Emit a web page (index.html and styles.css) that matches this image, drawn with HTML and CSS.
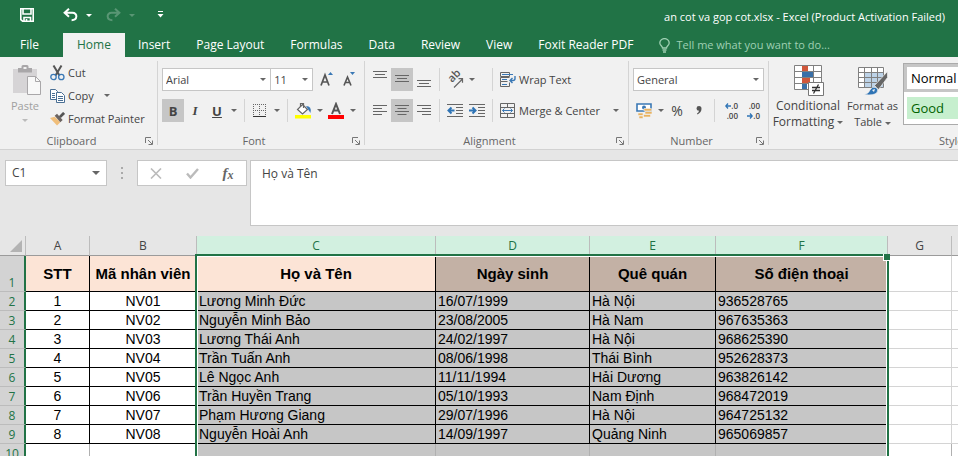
FILE: index.html
```html
<!DOCTYPE html>
<html lang="vi">
<head>
    <meta charset="UTF-8">
    <meta name="viewport" content="width=device-width, initial-scale=1.0">
    <title>an cot va gop cot.xlsx - Excel</title>
    <link rel="stylesheet" href="styles.css">
</head>
<body>

<header class="top">
    <div class="titlebar">
        <div class="quick">
            <button class="quick-btn" aria-label="Save">
                <svg width="14" height="14" viewBox="0 0 14 14" fill="none" stroke="#fff" stroke-width="1.6"><path d="M.8.8h12.4v12.4H2.6L.8 11.6z"/><path d="M3 1v5h8V1"/><path d="M4 13V9.500h6.500v4"/><path d="M6.500 11v2"/></svg>
            </button>
            <button class="quick-btn undo" aria-label="Undo">
                <svg width="15" height="14" viewBox="0 0 15 14" fill="none" stroke="#fff" stroke-width="2"><path d="M6 .8 1.6 4.8 6 8.8M2 4.8h7.4c5.6 0 5.2 7.4-.8 7.4"/></svg>
                <i class="caret"></i>
            </button>
            <button class="quick-btn redo" aria-label="Redo">
                <svg width="15" height="14" viewBox="0 0 15 14" fill="none" stroke="#fff" stroke-width="2"><path d="M9 .8l4.4 4L9 8.8M13 4.8H5.6c-5.6 0-5.2 7.4.8 7.4"/></svg>
                <i class="caret"></i>
            </button>
            <button class="quick-btn" aria-label="Customize">
                <svg width="7" height="8" viewBox="0 0 7 8" fill="#fff"><path d="M1 0h5v1H1zM.5 3h6l-3 3.5z"/></svg>
            </button>
        </div>
        <h1 class="doc-title">an cot va gop cot.xlsx - Excel (Product Activation Failed)</h1>
    </div>
    <nav class="tabs">
        <a class="tab file" href="#">File</a>
        <a class="tab active" href="#">Home</a>
        <a class="tab" href="#">Insert</a>
        <a class="tab" href="#">Page Layout</a>
        <a class="tab" href="#">Formulas</a>
        <a class="tab" href="#">Data</a>
        <a class="tab" href="#">Review</a>
        <a class="tab" href="#">View</a>
        <a class="tab" href="#">Foxit Reader PDF</a>
        <a class="tab tell" href="#">
            <svg width="11" height="15" viewBox="0 0 11 15" fill="none" stroke="#9fd0b3" stroke-width="1.3"><path d="M3.5 10C3.5 8 .8 7.400.8 4.900a4.700 4.300 0 0 1 9.400 0C10.200 7.400 7.500 8 7.500 10z"/><path d="M3.500 12h4M4 14h3"/></svg>
            Tell me what you want to do...
        </a>
    </nav>
</header>

<section class="ribbon">
    <div class="group clipboard">
        <div class="clip-body">
            <button class="paste" disabled>
                <svg width="30" height="31" viewBox="0 0 30 31"><path fill="#d6d4d6" d="M1 4h24v24H1z"/><path fill="#a9a7a9" d="M6 3h3.500V1.500Q9.500 0 11 0h4q1.500 0 1.500 1.500V3H20v4.500H6zM11.500 2v2h3V2z"/><path fill="#f8f8f8" stroke="#a9a7a9" d="M15.500 11.500h8l5 5v13h-13z"/><path fill="none" stroke="#a9a7a9" d="M23.500 11.500v5h5"/></svg>
                <span>Paste</span>
                <i class="caret"></i>
            </button>
            <div class="clip-list">
                <button class="item">
                    <svg width="15" height="16" viewBox="0 0 15 16" fill="none"><path stroke="#555" stroke-width="2" d="M3.500.5l6 10M11.500.5l-6 10"/><circle cx="3.500" cy="12" r="2.700" stroke="#3a78b5" stroke-width="1.300"/><circle cx="11.300" cy="12" r="2.700" stroke="#3a78b5" stroke-width="1.300"/></svg>
                    Cut
                </button>
                <button class="item">
                    <svg width="15" height="14" viewBox="0 0 15 14" fill="#fff" stroke="#4a6f94"><path d="M.5.5h5l2 2v8h-7z"/><path d="M2 4.500h3M2 6.500h3M2 8.500h3"/><path d="M6.500 3.500h5l3 3v7h-8z"/><path d="M8 7.500h5M8 9.500h5M8 11.500h5"/></svg>
                    Copy
                    <i class="caret"></i>
                </button>
                <button class="item">
                    <svg width="15" height="14" viewBox="0 0 16 14"><path fill="#f0be7a" d="M0 6l5-1.500 6 6L7.500 14z"/><path fill="#6b6360" d="M5 3.500l2.500-2 6 6.500-2.500 2.500z"/><path stroke="#555" stroke-width="3" d="M10.500 5l4.500-4.500"/></svg>
                    Format Painter
                </button>
            </div>
        </div>
        <div class="group-label">Clipboard</div>
        <svg class="launcher" width="8" height="8" viewBox="0 0 8 8" fill="none" stroke="#777"><path d="M.5 6V.5H6M3 3l4 4M7.500 3.500v4h-4"/></svg>
    </div>

    <div class="group font">
        <div class="row">
            <div class="combo font-name"><select aria-label="Font"><option>Arial</option></select></div>
            <div class="combo font-size"><select aria-label="Font size"><option>11</option></select></div>
            <button class="tool grow" aria-label="Increase font size">
                <svg width="14" height="15" viewBox="0 0 14 15"><path fill="none" stroke="#555" stroke-width="1.700" d="M1 13.500 5 3l4 10.500M2.500 10h5"/><path fill="#3a78b5" d="M8 3h5l-2.500-3z"/></svg>
            </button>
            <button class="tool" aria-label="Decrease font size">
                <svg width="13" height="15" viewBox="0 0 13 15"><path fill="none" stroke="#555" stroke-width="1.600" d="M1 13.500 4.500 5 8 13.500M2.200 10.500h4.600"/><path fill="#3a78b5" d="M7 0h5L9.500 3z"/></svg>
            </button>
        </div>
        <div class="row">
            <button class="tool on bold">B</button>
            <button class="tool italic">I</button>
            <button class="tool underline">U</button>
            <button class="drop" aria-label="Underline options"><i class="caret"></i></button>
            <span class="sep"></span>
            <button class="tool" aria-label="Borders">
                <svg width="14" height="14" viewBox="0 0 14 14" fill="none" stroke="#666"><path stroke-dasharray="1 1" d="M0 .5h13M0 6.500h13M.5 0v12M6.500 0v12M12.500 0v12"/><path stroke="#333" d="M0 12.500h13"/></svg>
            </button>
            <button class="drop" aria-label="Border options"><i class="caret"></i></button>
            <span class="sep"></span>
            <button class="tool" aria-label="Fill color">
                <svg width="17" height="17" viewBox="0 0 17 17"><path fill="#ff0" d="M0 13h16v3.500H0z"/><path fill="#fff" stroke="#666" stroke-width="1.200" d="M7.500 2.500l5 5-5 4.500-5-4.500z"/><path fill="none" stroke="#666" stroke-width="1.200" d="M5.500 5V1.500h3V6"/><path fill="#3a78b5" d="M11 4q6 0 4.500 7l-2-3z"/></svg>
            </button>
            <button class="drop" aria-label="Fill options"><i class="caret"></i></button>
            <button class="tool" aria-label="Font color">
                <svg width="17" height="17" viewBox="0 0 17 17"><path fill="#f00" d="M0 13h16v4H0z"/><path fill="none" stroke="#555" stroke-width="2" d="M4 12 8 2 12 12M5.500 8.500h5"/></svg>
            </button>
            <button class="drop" aria-label="Font color options"><i class="caret"></i></button>
        </div>
        <div class="group-label">Font</div>
        <svg class="launcher" width="8" height="8" viewBox="0 0 8 8" fill="none" stroke="#777"><path d="M.5 6V.5H6M3 3l4 4M7.500 3.500v4h-4"/></svg>
    </div>

    <div class="group alignment">
        <div class="row">
            <button class="tool" aria-label="Top align"><svg width="14" height="17" viewBox="0 0 14 17" stroke="#666"><path d="M0 .5h14M2 3.500h10M0 6.500h14"/></svg></button>
            <button class="tool on" aria-label="Middle align"><svg width="14" height="17" viewBox="0 0 14 17" stroke="#666"><path d="M0 4.500h14M2 7.500h10M0 10.500h14"/></svg></button>
            <button class="tool" aria-label="Bottom align"><svg width="14" height="17" viewBox="0 0 14 17" stroke="#666"><path d="M0 9.500h14M2 12.500h10M0 15.500h14"/></svg></button>
            <span class="sep"></span>
            <div class="cluster">
                <button class="tool" aria-label="Orientation">
                    <svg class="orient" width="17" height="16" viewBox="0 0 17 16"><text class="ab" transform="translate(5 11) rotate(-45)">ab</text><path fill="none" stroke="#666" stroke-width="1.200" d="M7 15.500 15.500 7M11.500 6.700h4v4"/></svg>
                </button>
                <button class="drop" aria-label="Orientation options"><i class="caret"></i></button>
            </div>
            <span class="sep"></span>
            <button class="wide">
                <svg width="16" height="16" viewBox="0 0 16 16" fill="none" stroke="#666"><path d="M.5.500h9v4h-9zM9.500 5.500h-9v4h7M.5 9.500v5h9v-4"/><path stroke="#3a78b5" d="M2 2.500h11M2 7.500h5M2 12.500h5"/><path stroke="#3a78b5" stroke-width="1.400" d="M15 4v2.500q0 2-2 2h-3M12.500 6 10 8.500l2.500 2.500"/></svg>
                Wrap Text
            </button>
        </div>
        <div class="row">
            <button class="tool" aria-label="Align left"><svg width="14" height="14" viewBox="0 0 14 14" stroke="#666"><path d="M0 1.500h14M0 4.500h9M0 7.500h14M0 10.500h9"/></svg></button>
            <button class="tool on" aria-label="Center"><svg width="14" height="14" viewBox="0 0 14 14" stroke="#666"><path d="M0 1.500h14M2.500 4.500h9M0 7.500h14M2.500 10.500h9"/></svg></button>
            <button class="tool" aria-label="Align right"><svg width="14" height="14" viewBox="0 0 14 14" stroke="#666"><path d="M0 1.500h14M5 4.500h9M0 7.500h14M5 10.500h9"/></svg></button>
            <span class="sep"></span>
            <div class="cluster">
                <button class="tool" aria-label="Decrease indent"><svg width="16" height="14" viewBox="0 0 16 14" fill="none" stroke="#666"><path d="M0 .5h16M9 3.500h7M9 6.500h7M9 9.500h7M0 12.500h16"/><path stroke="#2f74b5" stroke-width="2" d="M7.500 6.500H1.500M4.500 3.500l-3 3 3 3"/></svg></button>
                <button class="tool" aria-label="Increase indent"><svg width="16" height="14" viewBox="0 0 16 14" fill="none" stroke="#666"><path d="M0 .5h16M9 3.500h7M9 6.500h7M9 9.500h7M0 12.500h16"/><path stroke="#2f74b5" stroke-width="2" d="M0 6.500h6M3.500 3.500l3 3-3 3"/></svg></button>
            </div>
            <span class="sep"></span>
            <button class="wide merge">
                <svg width="16" height="16" viewBox="0 0 16 16" fill="none" stroke="#666"><path d="M.5.500h14v14H.500zM.5 4.500h14M.5 10.500h14M7.500.500v4M7.500 10.500v4"/><path stroke="#3a78b5" d="M2.500 7.500h10M4.500 5.500l-2 2 2 2M10.500 5.500l2 2-2 2"/></svg>
                Merge &amp; Center
            </button>
            <button class="drop" aria-label="Merge options"><i class="caret"></i></button>
        </div>
        <div class="group-label">Alignment</div>
        <svg class="launcher" width="8" height="8" viewBox="0 0 8 8" fill="none" stroke="#777"><path d="M.5 6V.5H6M3 3l4 4M7.500 3.500v4h-4"/></svg>
    </div>

    <div class="group number">
        <div class="row">
            <div class="combo format"><select aria-label="Number format"><option>General</option></select></div>
        </div>
        <div class="row">
            <button class="tool" aria-label="Accounting format">
                <svg width="17" height="16" viewBox="0 0 17 16"><path fill="#fff" stroke="#3a78b5" stroke-width="1.600" d="M1 1h14v7H1z"/><circle cx="8" cy="4.500" r="2" fill="#3a78b5"/><path fill="#e9b25f" stroke="#f1f1f1" stroke-width=".6" d="M8 5.500h7.500V8H8zM9 8.500h7V11H9zM7.500 11.500h7V14h-7zM2 10h5v2.500H2zM3 13h4v2.500H3z"/></svg>
            </button>
            <button class="drop" aria-label="Accounting options"><i class="caret"></i></button>
            <button class="tool percent">%</button>
            <button class="tool" aria-label="Comma style"><svg width="6" height="9" viewBox="0 0 6 9" fill="#555"><path d="M3 0q2.500 0 2.500 2.800Q5.500 6.500 1.500 8.500L1 7.500Q3 6.300 3 4.800.500 4.800.500 2.400.500 0 3 0z"/></svg></button>
            <span class="sep"></span>
            <button class="tool decimals"><span><svg width="6" height="6" viewBox="0 0 6 6" fill="none" stroke="#2f74b5" stroke-width="1.300"><path d="M6 3H1M3 .5.800 3 3 5.500"/></svg>.0</span><span>.00</span></button>
            <button class="tool decimals"><span>.00</span><span><svg width="6" height="6" viewBox="0 0 6 6" fill="none" stroke="#2f74b5" stroke-width="1.300"><path d="M0 3h5M3 .5 5.200 3 3 5.500"/></svg>.0</span></button>
        </div>
        <div class="group-label">Number</div>
        <svg class="launcher" width="8" height="8" viewBox="0 0 8 8" fill="none" stroke="#777"><path d="M.5 6V.5H6M3 3l4 4M7.500 3.500v4h-4"/></svg>
    </div>

    <div class="group styles">
        <div class="styles-body">
            <button class="big conditional">
                <svg width="31" height="31" viewBox="0 0 31 31"><path fill="#fff" stroke="#808080" d="M1.500.500h27v24h-27zM1.500 6.500h27M1.500 12.500h27M1.500 18.500h27M9.500.500v24M20.500.500v24"/><path fill="#d0573b" d="M9 1h6v5H9zM9 13h8v5H9z"/><path fill="#3a70a8" d="M9 7h11v5H9zM9 19h5v5H9z"/><path fill="#fff" stroke="#777" d="M15.500 17.500h15v13h-15z"/><path fill="none" stroke="#333" stroke-width="1.300" d="M19 22.500h8M19 25.500h8M25.500 19.500l-5 9"/></svg>
                <span>Conditional</span>
                <span>Formatting <i class="caret"></i></span>
            </button>
            <button class="big format-table">
                <svg width="31" height="31" viewBox="0 0 31 31"><path fill="#fff" d="M1.500 2.500h26v20h-26z"/><path fill="#bdd3e8" d="M8 8h19v14H8z"/><path fill="none" stroke="#808080" d="M1.500 2.500h25v20h-25zM1.500 7.500h25M1.500 12.500h25M1.500 17.500h25M7.500 2.500v20M14.500 2.500v20M20.500 2.500v20"/><path fill="#666" stroke="#f1f1f1" stroke-width=".7" d="M30.500 6.500v6l-9 12-4-4z"/><path fill="#2f74b5" stroke="#f1f1f1" stroke-width=".7" d="M7 29.500q5-1 6-4.500 2-4 6-2.500 3 2 1 5-3 3.500-13 2z"/><path fill="#f1f1f1" d="M15 25l3-1-1 3z"/></svg>
                <span>Format as</span>
                <span>Table <i class="caret"></i></span>
            </button>
            <div class="gallery">
                <button class="swatch normal">Normal</button>
                <button class="swatch good">Good</button>
            </div>
        </div>
        <div class="group-label">Styles</div>
    </div>
</section>

<section class="formula-bar">
    <div class="name-box">
        <input type="text" value="C1" aria-label="Name box">
        <i class="caret"></i>
    </div>
    <svg class="dots" width="3" height="12" viewBox="0 0 3 12" fill="#aaa"><path d="M0 0h2v2H0zM0 5h2v2H0zM0 10h2v2H0z"/></svg>
    <div class="formula-btns">
        <button aria-label="Cancel"><svg width="12" height="11" viewBox="0 0 12 11" fill="none" stroke="#bbb" stroke-width="1.600"><path d="M1 .500l10 10M11 .500l-10 10"/></svg></button>
        <button aria-label="Enter"><svg width="13" height="11" viewBox="0 0 13 11" fill="none" stroke="#bbb" stroke-width="2.400"><path d="M1 5.500l3.500 4L12 1"/></svg></button>
        <button class="fx"><i>f</i><small>x</small></button>
    </div>
    <textarea class="formula" aria-label="Formula bar">Họ và Tên</textarea>
</section>

<main class="sheet">
    <table>
        <colgroup>
            <col class="col-head"><col class="col-a"><col class="col-b"><col class="col-c"><col class="col-d"><col class="col-e"><col class="col-f"><col class="col-g"><col>
        </colgroup>
        <thead>
            <tr>
                <th class="corner"><svg width="12" height="12" viewBox="0 0 12 12" fill="#b3b3b3"><path d="M12 0v12H0z"/></svg></th>
                <th>A</th><th>B</th><th class="sel">C</th><th class="sel">D</th><th class="sel">E</th><th class="sel">F</th><th>G</th><th></th>
            </tr>
        </thead>
        <tbody>
            <tr class="titles"><th>1</th><td>STT</td><td>Mã nhân viên</td><td>Họ và Tên</td><td class="dark">Ngày sinh</td><td class="dark">Quê quán</td><td class="dark">Số điện thoại</td><td></td><td></td></tr>
            <tr><th>2</th><td>1</td><td>NV01</td><td>Lương Minh Đức</td><td>16/07/1999</td><td>Hà Nội</td><td>936528765</td><td></td><td></td></tr>
            <tr><th>3</th><td>2</td><td>NV02</td><td>Nguyễn Minh Bảo</td><td>23/08/2005</td><td>Hà Nam</td><td>967635363</td><td></td><td></td></tr>
            <tr><th>4</th><td>3</td><td>NV03</td><td>Lương Thái Anh</td><td>24/02/1997</td><td>Hà Nội</td><td>968625390</td><td></td><td></td></tr>
            <tr><th>5</th><td>4</td><td>NV04</td><td>Trần Tuấn Anh</td><td>08/06/1998</td><td>Thái Bình</td><td>952628373</td><td></td><td></td></tr>
            <tr><th>6</th><td>5</td><td>NV05</td><td>Lê Ngọc Anh</td><td>11/11/1994</td><td>Hải Dương</td><td>963826142</td><td></td><td></td></tr>
            <tr><th>7</th><td>6</td><td>NV06</td><td>Trần Huyền Trang</td><td>05/10/1993</td><td>Nam Định</td><td>968472019</td><td></td><td></td></tr>
            <tr><th>8</th><td>7</td><td>NV07</td><td>Phạm Hương Giang</td><td>29/07/1996</td><td>Hà Nội</td><td>964725132</td><td></td><td></td></tr>
            <tr><th>9</th><td>8</td><td>NV08</td><td>Nguyễn Hoài Anh</td><td>14/09/1997</td><td>Quảng Ninh</td><td>965069857</td><td></td><td></td></tr>
            <tr class="empty"><th>10</th><td></td><td></td><td></td><td></td><td></td><td></td><td></td><td></td></tr>
        </tbody>
    </table>
    <div class="selection"></div>
</main>

</body>
</html>
```

FILE: styles.css
```css
* {
    box-sizing: border-box;
}
body {
    font-family: "Open Sans", "Noto Sans", sans-serif;
    font-size: 12px;
    line-height: 16px;
    color: #444;
    margin: 0;
    height: 100vh;
    overflow: hidden;
    background-color: #e6e6e6;
}
button, select, input, textarea {
    font: inherit;
    color: inherit;
    margin: 0;
    padding: 0;
    border: none;
    background: none;
}
button {
    display: flex;
    align-items: center;
    justify-content: center;
    white-space: nowrap;
}
svg {
    flex: none;
}
.caret {
    display: inline-block;
    border: 3px solid transparent;
    border-top-color: #666;
    border-bottom: none;
}

/* Title bar and tabs */
.top {
    background-color: #217346;
    color: #fff;
}
.titlebar {
    display: flex;
    align-items: center;
    justify-content: space-between;
    height: 33px;
    padding: 0 13px 0 20px;
}
.quick {
    display: flex;
    align-items: center;
    margin-bottom: 3px;
}
.quick-btn {
    gap: 8px;
}
.quick-btn .caret {
    border-top-color: #fff;
}
.undo {
    margin-left: 29px;
}
.redo {
    margin: 0 22px 0 14px;
    opacity: 0.25;
}
.doc-title {
    margin: 0;
    font-size: 11px;
    font-weight: normal;
}
.tabs {
    display: flex;
    height: 24px;
}
.tab {
    display: flex;
    align-items: center;
    padding: 0 13px;
    color: #fff;
    text-decoration: none;
    white-space: nowrap;
}
.file {
    width: 63px;
    padding-left: 20px;
}
.active {
    padding: 0 14px;
    background-color: #f1f1f1;
    color: #217346;
}
.tell {
    gap: 6px;
    color: #9fd0b3;
    font-size: 11px;
}

/* Ribbon */
.ribbon {
    display: flex;
    height: 93px;
    padding: 4px 0;
    background-color: #f1f1f1;
    border-bottom: 1px solid #d2d2d2;
    overflow: hidden;
}
.group {
    position: relative;
    flex: none;
    padding: 7px 4px 0;
    border-right: 1px solid #d4d4d4;
}
.clipboard {
    width: 158px;
    padding: 0;
}
.font {
    width: 207px;
}
.alignment {
    width: 264px;
}
.number {
    width: 140px;
}
.styles {
    flex: 1;
    min-width: 0;
    padding: 0;
    border: none;
}
.group-label {
    position: absolute;
    left: 0;
    right: 14px;
    bottom: -4px;
    font-size: 11px;
    text-align: center;
    color: #666;
}
.styles .group-label {
    right: auto;
    left: 170px;
}
.launcher {
    position: absolute;
    right: 4px;
    bottom: 0;
}
.row {
    display: flex;
    height: 23px;
    margin-bottom: 8px;
}
.tool {
    width: 22px;
}
.drop {
    width: 11px;
}
.on {
    background-color: #c6c6c6;
}
.sep {
    width: 1px;
    margin: 0 4px 0 5px;
    background-color: #d4d4d4;
}
.alignment .sep, .number .sep {
    margin: 0 4px;
}
.cluster {
    display: flex;
    width: 44px;
}
.wide {
    gap: 3px;
    padding: 0 3px;
    font-size: 11px;
}
.merge {
    margin-right: 8px;
}
.orient {
    overflow: visible;
}
.ab {
    font-size: 11px;
    font-weight: 600;
    fill: #555;
}
.bold, .italic, .underline {
    font-size: 13px;
    font-weight: bold;
}
.italic {
    font-family: "Liberation Serif", serif;
    font-style: italic;
}
.underline {
    text-decoration: underline;
}
.percent {
    font-size: 14px;
}
.decimals {
    flex-direction: column;
    align-items: flex-end;
    padding-right: 3px;
    font-size: 8px;
    font-weight: 600;
    line-height: 10px;
}

/* Drop-down boxes */
.combo {
    position: relative;
    background-color: #fff;
    border: 1px solid #c6c6c6;
}
.combo select {
    appearance: none;
    width: 100%;
    height: 100%;
    padding-left: 3px;
    font-size: 11px;
}
.combo::after {
    content: "";
    position: absolute;
    right: 4px;
    top: 9px;
    border: 3px solid transparent;
    border-top-color: #666;
    border-bottom: none;
    pointer-events: none;
}
.font-name {
    width: 112px;
}
.font-size {
    width: 43px;
    border-left: none;
}
.grow {
    margin: 0 1px 0 3px;
}
.format {
    width: 131px;
}

/* Clipboard */
.clip-body {
    display: flex;
}
.paste {
    flex-direction: column;
    justify-content: flex-start;
    width: 50px;
    padding-top: 4px;
    color: #a0a0a0;
    font-size: 11px;
}
.paste svg {
    margin: 0 0 2px 3px;
}
.paste .caret {
    margin-top: 5px;
    border-top-color: #bbb;
}
.clip-list {
    display: flex;
    flex-direction: column;
}
.item {
    justify-content: flex-start;
    gap: 3px;
    height: 23px;
    font-size: 11px;
}
.item .caret {
    margin-left: 7px;
}

/* Styles */
.styles-body {
    display: flex;
}
.big {
    flex: none;
    flex-direction: column;
    justify-content: flex-start;
    padding-top: 4px;
}
.big svg {
    margin-bottom: 2px;
}
.big .caret {
    vertical-align: middle;
}
.conditional {
    width: 78px;
}
.format-table {
    width: 51px;
    font-size: 11px;
}
.gallery {
    flex: 1;
    height: 62px;
    margin: 2px 0 0 5px;
    background-color: #fff;
    border: 1px solid #ababab;
    border-right: none;
}
.swatch {
    width: 100%;
    justify-content: flex-start;
    padding-left: 4px;
    font-size: 13px;
}
.normal {
    height: 28px;
    border: 3px solid #c6c6c6;
    border-right: none;
    color: #000;
}
.good {
    height: 22px;
    margin: 5px 0 0 3px;
    background-color: #c6efce;
    color: #006100;
}

/* Formula bar */
.formula-bar {
    display: flex;
    align-items: flex-start;
    height: 86px;
    padding: 10px 0 0 5px;
}
.name-box {
    display: flex;
    align-items: center;
    width: 102px;
    height: 26px;
    padding: 0 6px;
    background-color: #fff;
    border: 1px solid #c6c6c6;
}
.name-box input {
    flex: 1;
    min-width: 0;
}
.name-box .caret {
    border-width: 4px;
    border-bottom: none;
}
.dots {
    margin: 7px 13px 0 14px;
}
.formula-btns {
    display: flex;
    width: 110px;
    height: 26px;
    background-color: #fff;
    border: 1px solid #c6c6c6;
}
.formula-btns button {
    flex: 1;
}
.fx {
    font-family: "Liberation Serif", serif;
    font-size: 15px;
    font-weight: bold;
    font-style: italic;
    color: #666;
}
.fx small {
    font-size: 12px;
    padding-top: 4px;
}
.formula {
    flex: 1;
    height: 66px;
    margin-left: 3px;
    padding: 5px 11px;
    background-color: #fff;
    border: 1px solid #c6c6c6;
    border-right: none;
    resize: none;
}

/* Sheet */
.sheet {
    position: relative;
    background-color: #fff;
}
table {
    width: 100%;
    table-layout: fixed;
    border-collapse: separate;
    border-spacing: 0;
}
.col-head {
    width: 26px;
}
.col-a, .col-g {
    width: 64px;
}
.col-b {
    width: 107px;
}
.col-c {
    width: 239px;
}
.col-d {
    width: 154px;
}
.col-e {
    width: 126px;
}
.col-f {
    width: 172px;
}
th, td {
    height: 19px;
    padding: 1px 0 0;
    line-height: 17px;
    white-space: nowrap;
    overflow: hidden;
}
th {
    font-weight: normal;
}
thead th {
    height: 20px;
    padding: 0;
    background-color: #e6e6e6;
    border-right: 1px solid #bcbcbc;
    border-bottom: 1px solid #9b9b9b;
}
thead .sel {
    background-color: #d2f0e0;
    color: #217346;
}
.corner svg {
    display: block;
    margin-left: 10px;
}
tbody th {
    background-color: #d3d3d3;
    border-right: 2px solid #217346;
    border-bottom: 1px solid #bcbcbc;
    color: #217346;
    vertical-align: bottom;
}
td {
    font-family: "Liberation Sans", Arial, sans-serif;
    font-size: 14px;
    color: #000;
    border-right: 1px solid #000;
    border-bottom: 1px solid #000;
    text-align: center;
}
td:nth-child(n+4) {
    padding-left: 2px;
    background-color: #c6c6c6;
    text-align: left;
}
td:nth-child(n+8) {
    background-color: #fff;
    border-color: #d4d4d4;
}
th:last-child, td:last-child {
    border-right: none;
}
.titles td {
    height: 36px;
    padding: 0;
    font-size: 15px;
    font-weight: bold;
    text-align: center;
}
.titles td:nth-child(n+4) {
    padding-left: 0;
}
.titles td:nth-child(-n+4) {
    background-color: #fce4d6;
}
.titles .dark {
    background-color: #c3b1a5;
}
.empty td {
    border-color: #b0b0b0;
}
.selection {
    position: absolute;
    left: 195px;
    top: 18px;
    bottom: -10px;
    width: 694px;
    border: 2px solid #217346;
    box-shadow: inset 0 0 0 1px #fff;
    pointer-events: none;
}
.selection::after {
    content: "";
    position: absolute;
    right: -3px;
    top: -2px;
    width: 6px;
    height: 6px;
    background-color: #217346;
    border: 1px solid #fff;
    border-top: none;
    border-right: none;
}
```
